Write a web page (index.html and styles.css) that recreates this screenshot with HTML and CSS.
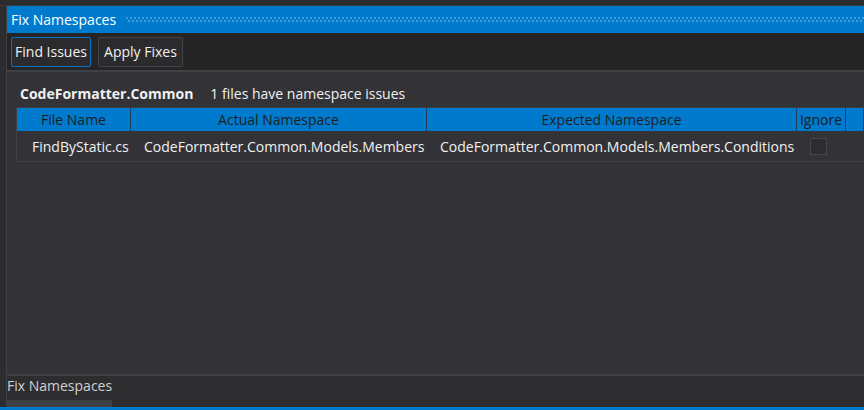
FILE: index.html
```html
<!DOCTYPE html>
<html>
<head>
<meta charset="utf-8">
<link rel="stylesheet" href="styles.css">
</head>
<body>
<div class="frame">
  <div class="topstrip"></div>
  <div class="window">
    <div class="titlebar">
      <span class="title">Fix Namespaces</span>
      <div class="grip"></div>
    </div>
    <div class="toolbar">
      <button class="btn find focused">Find Issues</button>
      <button class="btn apply">Apply Fixes</button>
    </div>
    <div class="content">
      <div class="group">
        <span class="project">CodeFormatter.Common</span>
        <span class="count">1 files have namespace issues</span>
      </div>
      <div class="grid">
        <div class="row head">
          <div class="cell c1">File Name</div>
          <div class="cell c2">Actual Namespace</div>
          <div class="cell c3">Expected Namespace</div>
          <div class="cell c4">Ignore</div>
          <div class="cell c5"></div>
        </div>
        <div class="row data">
          <div class="cell c1">FindByStatic.cs</div>
          <div class="cell c2">CodeFormatter.Common.Models.Members</div>
          <div class="cell c3">CodeFormatter.Common.Models.Members.Conditions</div>
          <div class="cell c4"><span class="check"></span></div>
          <div class="cell c5"></div>
        </div>
      </div>
    </div>
    <div class="footer">
      <div class="tabtext">Fix Namespaces</div>
      <div class="tabbar"></div>
    </div>
  </div>
  <div class="status"></div>
</div>
</body>
</html>
```
FILE: styles.css
```css
html, body {
  margin: 0;
  padding: 0;
}
body {
  width: 864px;
  height: 410px;
  overflow: hidden;
  background: #2d2d30;
  font-family: "Open Sans", "Noto Sans", sans-serif;
  font-size: 14px;
  color: #f1f1f1;
}
.frame {
  display: flex;
  flex-direction: column;
  height: 410px;
}
.topstrip {
  height: 5px;
  background: #2b2b2d;
  border-bottom: 1px solid #3a3a3e;
}
.window {
  flex: 1;
  display: flex;
  flex-direction: column;
  margin-left: 6px;
  border-left: 1px solid #3f3f46;
  min-height: 0;
}
.titlebar {
  height: 27px;
  background: #007acc;
  display: flex;
  align-items: center;
  padding-left: 4px;
  gap: 10px;
}
.title {
  color: #ffffff;
  white-space: nowrap;
}
.grip {
  flex: 1;
  height: 6px;
  margin-top: 1px;
  background-image:
    radial-gradient(circle at 1px 1px, rgba(130, 190, 240, 0.5) 0.7px, transparent 0.9px),
    radial-gradient(circle at 3px 4px, rgba(130, 190, 240, 0.5) 0.7px, transparent 0.9px);
  background-size: 4px 6px;
}
.toolbar {
  height: 37px;
  background: #252526;
  display: flex;
  align-items: center;
  padding-left: 4px;
  gap: 7px;
  border-bottom: 2px solid #3f3f46;
}
.btn {
  height: 30px;
  padding: 0;
  background: #2b2b2e;
  color: #f1f1f1;
  border: 1px solid #434346;
  border-radius: 2px;
  font-family: inherit;
  font-size: 14px;
}
.btn.find { width: 80px; }
.btn.apply { width: 85px; }
.btn.focused {
  border-color: #0e70c0;
}
.content {
  height: 304px;
  background: #333337;
  border-bottom: 2px solid #3f3f46;
  padding: 10px 0 0 9px;
  box-sizing: border-box;
}
.group {
  display: flex;
  gap: 17px;
  padding-left: 4px;
  height: 25px;
  align-items: center;
  margin-top: -1px;
}
.project {
  font-weight: 700;
}
.grid {
  border-left: 1px solid #3f3f46;
  border-top: 1px solid #3f3f46;
  margin-top: 1px;
}
.row {
  display: flex;
}
.row.head {
  height: 23px;
  background: #007acc;
  color: #1e1e1e;
  align-items: stretch;
}
.row.head .cell {
  justify-content: center;
  border-right: 1px solid #1f3f5f;
}
.row.data {
  height: 30px;
  border-bottom: 1px solid #3f3f46;
}
.cell {
  display: flex;
  align-items: center;
  box-sizing: border-box;
  white-space: nowrap;
  overflow: hidden;
}
.c1 { width: 114px; }
.c2 { width: 296px; }
.c3 { width: 370px; }
.c4 { width: 49px; }
.c5 { flex: 1; }
.row.data .c1 { padding-left: 15px; }
.row.data .c2 { padding-left: 13px; }
.row.data .c3 { padding-left: 13px; }
.row.data .c4 { padding-left: 13px; }
.check {
  width: 17px;
  height: 17px;
  border: 1px solid #46464a;
  box-sizing: border-box;
  background: #2d2d30;
}
.footer {
  flex: 1;
  background: #2d2d30;
  display: flex;
  flex-direction: column;
  justify-content: flex-end;
}
.tabtext {
  color: #d0d0d0;
  line-height: 20px;
  margin-bottom: 4px;
}
.tabbar {
  width: 106px;
  height: 7px;
  background: #3f3f46;
  margin-left: -1px;
}
.status {
  height: 3px;
  background: #007acc;
}
```
